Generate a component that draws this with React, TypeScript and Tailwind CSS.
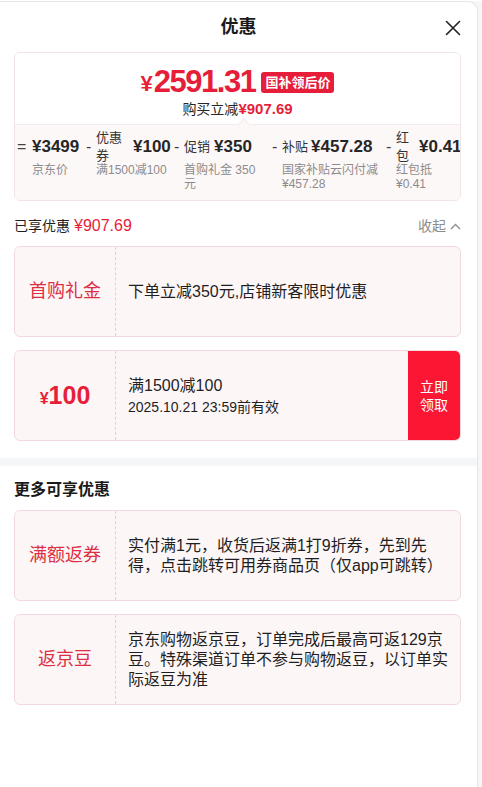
import React from "react";

const RED = "text-[#e61e3a]";

function Card({
  left,
  children,
  button,
}: {
  left: React.ReactNode;
  children: React.ReactNode;
  button?: React.ReactNode;
}) {
  return (
    <div className="flex h-[91px] rounded-[6px] border border-[#f3d9de] bg-[#fdf6f7] overflow-hidden">
      <div className="w-[101px] shrink-0 flex items-center justify-center border-r border-dashed border-[#ecccd2]">
        {left}
      </div>
      <div className="flex-1 min-w-0 flex flex-col justify-center pl-[12px] pr-[10px] text-[16px] leading-[20px] text-[#1f1f1f]">
        {children}
      </div>
      {button}
    </div>
  );
}

function Sign({ c, w }: { c: string; w: string }) {
  return (
    <div className={`${w} shrink-0 h-[24px] flex items-center text-[16px] text-[#444]`}>{c}</div>
  );
}

export default function App() {
  return (
    <div className="w-[482px] min-h-[787px] bg-[#f6f6f6] font-['Liberation_Sans','Noto_Sans_CJK_SC',sans-serif]">
      <div className="w-[478px] min-h-[787px] mt-px bg-white border-t border-r border-[#e6e6e6] rounded-tr-[10px]">
        {/* header */}
        <div className="relative h-[50px] flex items-center justify-center">
          <div className="text-[18px] font-bold text-[#1a1a1a] leading-[24px]">优惠</div>
          <svg
            className="absolute right-[16px] top-[18px]"
            width="16"
            height="16"
            viewBox="0 0 16 16"
            fill="none"
            stroke="#222"
            strokeWidth="1.6"
            strokeLinecap="round"
          >
            <path d="M1.5 1.5L14.5 14.5M14.5 1.5L1.5 14.5" />
          </svg>
        </div>

        <div className="pl-[14px] pr-[16px]">
          {/* price card */}
          <div className="rounded-[6px] border border-[#f1e4e6] overflow-hidden">
            <div className="bg-white pt-[11px] pb-[6px] flex flex-col items-center">
              <div className="flex items-center h-[34px]">
                <span className={`${RED} font-bold text-[22px] leading-none mt-[5px] mr-[1px]`}>¥</span>
                <span className={`${RED} font-bold text-[31px] tracking-[-1.5px] leading-none`}>2591.31</span>
                <span className="ml-[6px] bg-[#e61e3a] text-white text-[13px] font-bold px-[4px] h-[21px] leading-[21px] rounded-[3px] mt-[3px]">
                  国补领后价
                </span>
              </div>
              <div className="flex items-baseline leading-[18px] mt-[2px]">
                <span className="text-[14px] text-[#262626]">购买立减</span>
                <span className={`${RED} text-[15px] font-semibold`}>¥907.69</span>
              </div>
            </div>
            <div className="relative border-t border-[#f5eaec] bg-[#fdf8f8] h-[76px] pt-[10px] flex items-start whitespace-normal">
              <div className="absolute -top-[5px] left-[225px] w-[8px] h-[8px] rotate-45 bg-[#fdf8f8] border-l border-t border-[#f5eaec]" />
              {/* item1 */}
              <Sign c="=" w="w-[17px] pl-[2px]" />
              <div className="w-[54px] shrink-0">
                <div className="h-[24px] flex items-center text-[17px] font-bold text-[#262626]">¥3499</div>
                <div className="mt-[4px] text-[12px] leading-[14px] text-[#8c8c8c]">京东价</div>
              </div>
              {/* item2 */}
              <Sign c="-" w="w-[10px]" />
              <div className="w-[78px] shrink-0">
                <div className="h-[24px] flex items-center">
                  <span className="w-[26px] shrink-0 text-[13px] leading-[18px] text-[#333]">优惠券</span>
                  <span className="ml-[11px] text-[17px] font-bold text-[#262626] whitespace-nowrap">¥100</span>
                </div>
                <div className="mt-[4px] text-[12px] leading-[14px] text-[#8c8c8c] whitespace-nowrap">满1500减100</div>
              </div>
              {/* item3 */}
              <Sign c="-" w="w-[10px]" />
              <div className="w-[88px] shrink-0">
                <div className="h-[24px] flex items-center">
                  <span className="text-[13px] text-[#333] whitespace-nowrap">促销</span>
                  <span className="ml-[4px] text-[17px] font-bold text-[#262626] whitespace-nowrap">¥350</span>
                </div>
                <div className="mt-[4px] w-[80px] text-[12px] leading-[14px] text-[#8c8c8c]">首购礼金 350 元</div>
              </div>
              {/* item4 */}
              <Sign c="-" w="w-[10px]" />
              <div className="w-[104px] shrink-0">
                <div className="h-[24px] flex items-center">
                  <span className="text-[13px] text-[#333] whitespace-nowrap">补贴</span>
                  <span className="ml-[3px] text-[17px] font-bold text-[#262626] whitespace-nowrap">¥457.28</span>
                </div>
                <div className="mt-[4px] w-[100px] text-[12px] leading-[14px] text-[#8c8c8c]">国家补贴云闪付减 ¥457.28</div>
              </div>
              {/* item5 */}
              <Sign c="-" w="w-[10px]" />
              <div className="w-[64px] shrink-0">
                <div className="h-[24px] flex items-center">
                  <span className="w-[13px] shrink-0 text-[13px] leading-[18px] text-[#333]">红包</span>
                  <span className="ml-[10px] text-[17px] font-bold text-[#262626] whitespace-nowrap">¥0.41</span>
                </div>
                <div className="mt-[4px] w-[60px] text-[12px] leading-[14px] text-[#8c8c8c]">红包抵 ¥0.41</div>
              </div>
            </div>
          </div>

          {/* enjoyed row */}
          <div className="mt-[13px] mb-[8px] h-[24px] flex items-center justify-between">
            <div className="flex items-baseline">
              <span className="text-[14px] text-[#1f1f1f]">已享优惠</span>
              <span className={`${RED} text-[16px] ml-[4px]`}>¥907.69</span>
            </div>
            <div className="flex items-center text-[14px] text-[#8c8c8c]">
              收起
              <svg className="ml-[4px]" width="11" height="7" viewBox="0 0 11 7" fill="none" stroke="#8c8c8c" strokeWidth="1.3">
                <path d="M1 6L5.5 1.5L10 6" />
              </svg>
            </div>
          </div>

          <div className="flex flex-col gap-[13px]">
            <Card left={<span className="text-[18px] text-[#dc2f43]">首购礼金</span>}>
              <div>下单立减350元,店铺新客限时优惠</div>
            </Card>
            <Card
              left={
                <span className="text-[#e61e3a] font-bold flex items-baseline">
                  <span className="text-[16px]">¥</span>
                  <span className="text-[25px]">100</span>
                </span>
              }
              button={
                <div className="w-[52px] shrink-0 bg-[#fb1733] text-white text-[14px] leading-[18px] flex flex-col items-center justify-center">
                  <span>立即</span>
                  <span>领取</span>
                </div>
              }
            >
              <div className="leading-[22px]">满1500减100</div>
              <div className="text-[14px] leading-[20px]">2025.10.21 23:59前有效</div>
            </Card>
          </div>
        </div>

        {/* band */}
        <div className="mt-[17px] h-[8px] bg-[#f5f6f8]" />

        <div className="pl-[14px] pr-[16px]">
          <div className="mt-[12px] h-[24px] flex items-center text-[16px] font-bold text-[#1a1a1a]">更多可享优惠</div>
          <div className="mt-[8px] flex flex-col gap-[13px]">
            <Card left={<span className="text-[18px] text-[#dc2f43]">满额返券</span>}>
              <div>实付满1元，收货后返满1打9折券，先到先得，点击跳转可用券商品页（仅app可跳转）</div>
            </Card>
            <Card left={<span className="text-[18px] text-[#dc2f43]">返京豆</span>}>
              <div>京东购物返京豆，订单完成后最高可返129京豆。特殊渠道订单不参与购物返豆，以订单实际返豆为准</div>
            </Card>
          </div>
        </div>
      </div>
    </div>
  );
}
